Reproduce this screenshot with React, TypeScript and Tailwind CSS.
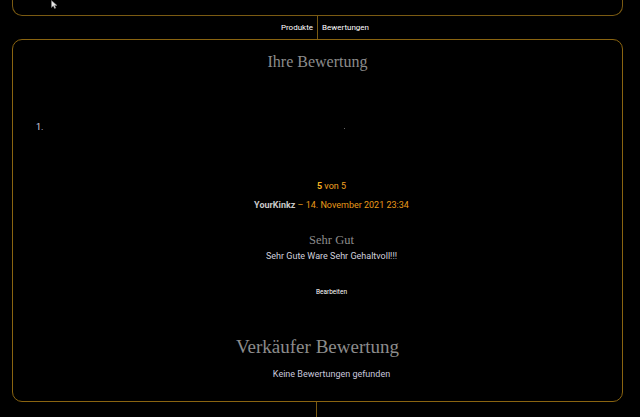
import * as React from 'react';

const serif = { fontFamily: '"Liberation Serif", "DejaVu Serif", serif' };

function Cursor() {
  return (
    <svg width="7" height="9" viewBox="0 0 7 9" className="block">
      <path d="M0.5 0.5 L0.5 7.5 L2.3 5.8 L3.6 8.5 L4.8 8 L3.6 5.4 L6 5.4 Z" fill="#e8e8e8" stroke="#888" strokeWidth="0.5" />
    </svg>
  );
}

export default function App() {
  return (
    <div className="min-h-[417px] w-[640px] bg-black font-['Roboto',sans-serif] overflow-hidden">
      {/* top card, mostly scrolled out of view */}
      <div className="ml-[12px] w-[611px] h-[16px] border-x border-b border-[#7a5a12] rounded-b-[10px] pl-[38px]">
        <Cursor />
      </div>

      {/* tabs */}
      <nav className="flex h-[23px] text-[8px] text-white">
        <div className="flex w-[317px] justify-end items-center pr-[4px]">Produkte</div>
        <div className="w-px bg-[#7a5a12]" />
        <div className="flex items-center pl-[4px]">Bewertungen</div>
      </nav>

      {/* reviews card */}
      <div className="ml-[12px] w-[611px] border border-[#8a6410] rounded-[10px] flex flex-col items-center pt-[10px] pb-[21px]">
        <h2 style={serif} className="text-[16px] leading-[24px] text-[#8c8c8c]">Ihre Bewertung</h2>

        <ol className="self-stretch mt-[48px] flex items-center h-[12px] pl-[23px] text-[9px] text-[#d8d8e4]">
          <li className="list-none">1.</li>
          <li className="list-none ml-[301px] w-px h-px bg-[#666]" />
        </ol>

        <div className="self-stretch pl-[28px] flex flex-col items-center">
          <p className="mt-[46px] text-[9px] leading-[12px] text-[#f0a020]">
            <span className="font-bold text-[#f7b320]">5</span> von 5
          </p>
          <p className="mt-[7px] text-[9px] leading-[12px]">
            <span className="font-bold text-[#c8c8c8]">YourKinkz</span>
            <span className="text-[#e89a1a]"> – 14. November 2021 23:34</span>
          </p>

          <h3 style={serif} className="mt-[20px] text-[12.5px] leading-[18px] text-[#8c8c8c]">Sehr Gut</h3>
          <p className="mt-[1px] text-[9px] leading-[12px] text-[#d0d0dc]">Sehr Gute Ware Sehr Gehaltvoll!!!</p>

          <button className="mt-[25px] text-[6.5px] leading-[10px] text-white">Bearbeiten</button>
        </div>

        <h2 style={serif} className="mt-[36px] text-[19px] leading-[28px] text-[#8c8c8c]">Verkäufer Bewertung</h2>
        <div className="self-stretch pl-[28px] flex justify-center">
          <p className="mt-[7px] text-[9px] leading-[12px] text-[#c8c8dc]">Keine Bewertungen gefunden</p>
        </div>
      </div>

      <div className="ml-[316px] w-px h-[20px] bg-[#7a5a12]" />
    </div>
  );
}
